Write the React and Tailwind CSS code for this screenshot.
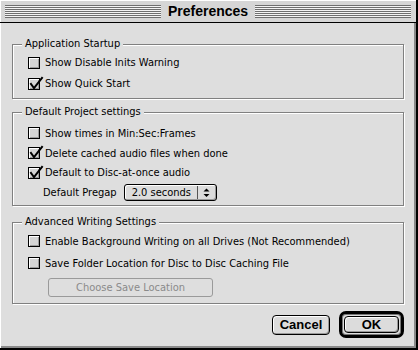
import React from 'react';

const stripes =
  "bg-[repeating-linear-gradient(to_bottom,#6f6f6f_0px,#6f6f6f_1px,#f4f4f4_1px,#f4f4f4_2px)]";

function Check({ checked }) {
  return (
    <span className="relative w-[12px] h-[12px] shrink-0 border border-black bg-[#d4d4d4] shadow-[inset_1px_1px_0_#fff,inset_-1px_-1px_0_#9a9a9a]">
      {checked && (
        <svg className="absolute left-[0px] top-[-4px]" width="15" height="15" viewBox="0 0 15 15">
          <path d="M2 9 L5 13 L13 3" stroke="black" strokeWidth="2" fill="none" strokeLinecap="square" />
        </svg>
      )}
    </span>
  );
}

function Row({ checked, label, h }) {
  return (
    <div className={`flex items-center gap-[5px] pl-[15px] whitespace-nowrap ${h}`}>
      <Check checked={checked} />
      <span className="leading-none">{label}</span>
    </div>
  );
}

function Group({ label, className, children }) {
  return (
    <div
      className={`relative ml-[12px] w-[392px] border border-[#808080] shadow-[inset_1px_1px_0_#fff,1px_1px_0_#fff] ${className}`}
    >
      <span className="absolute left-[9px] top-[-8px] h-[14px] px-[3px] bg-[#dedede] leading-[14px] whitespace-nowrap">
        {label}
      </span>
      {children}
    </div>
  );
}

export default function App() {
  return (
    <div className="w-[418px] h-[350px] bg-[#dedede] text-[11px] text-black font-['DejaVu_Sans_Condensed',sans-serif] border-r-2 border-b-2 border-black shadow-[inset_1px_1px_0_#fff,inset_-2px_-2px_0_#8a8a8a] overflow-hidden">
      {/* title bar */}
      <div className="h-[23px] flex items-center px-[5px] bg-[#d6d6d6] border-b border-black shadow-[inset_1px_1px_0_#fff]">
        <div className={`flex-1 h-[13px] ${stripes}`} />
        <div className="px-[7px] font-['Liberation_Sans',sans-serif] font-bold text-[14px] leading-none">
          Preferences
        </div>
        <div className={`flex-1 h-[13px] ${stripes}`} />
      </div>

      <Group label="Application Startup" className="mt-[21px] h-[55px] pt-[7px]">
        <Row h="h-[21px]" label="Show Disable Inits Warning" />
        <Row h="h-[21px]" checked label="Show Quick Start" />
      </Group>

      <Group label="Default Project settings" className="mt-[13px] h-[94px] pt-[10px]">
        <Row h="h-[20px]" label="Show times in Min:Sec:Frames" />
        <Row h="h-[20px]" checked label="Delete cached audio files when done" />
        <Row h="h-[19px]" checked label="Default to Disc-at-once audio" />
        <div className="flex items-center h-[21px] pl-[30px] whitespace-nowrap">
          <span className="leading-none">Default Pregap</span>
          <div className="ml-[7px] w-[93px] h-[17px] rounded-[3px] border border-black bg-[#dcdcdc] shadow-[inset_1px_1px_0_#fff,inset_-1px_-1px_0_#9a9a9a] flex items-center">
            <span className="flex-1 pl-[7px] leading-none">2.0 seconds</span>
            <span className="w-px h-[13px] bg-[#555]" />
            <span className="w-[18px] flex justify-center">
              <svg width="7" height="10" viewBox="0 0 7 10">
                <path d="M3.5 0.5 L6.5 3.5 L0.5 3.5 Z" fill="black" />
                <path d="M0.5 6 L6.5 6 L3.5 9 Z" fill="black" />
              </svg>
            </span>
          </div>
        </div>
      </Group>

      <Group label="Advanced Writing Settings" className="mt-[16px] h-[82px] pt-[7px]">
        <Row h="h-[22px]" label="Enable Background Writing on all Drives (Not Recommended)" />
        <Row h="h-[22px]" label="Save Folder Location for Disc to Disc Caching File" />
        <div className="pl-[35px] mt-[4px]">
          <div className="w-[165px] h-[19px] rounded-[3px] border border-[#9a9a9a] flex items-center justify-center text-[#8a8a8a] leading-none">
            Choose Save Location
          </div>
        </div>
      </Group>

      <div className="flex items-center justify-end gap-[9px] pr-[12px] mt-[7px] font-['Liberation_Sans',sans-serif] font-bold text-[13px]">
        <div className="w-[58px] h-[20px] rounded-[4px] border border-black bg-[#dcdcdc] shadow-[inset_1px_1px_0_#fff,inset_-1px_-1px_0_#999] flex items-center justify-center leading-none">
          Cancel
        </div>
        <div className="w-[65px] h-[27px] rounded-[7px] border-[3px] border-black shadow-[inset_0_0_0_1px_#777] p-[2px]">
          <div className="w-full h-full rounded-[4px] border border-black bg-[#dcdcdc] shadow-[inset_1px_1px_0_#fff,inset_-1px_-1px_0_#999] flex items-center justify-center leading-none">
            OK
          </div>
        </div>
      </div>
    </div>
  );
}
